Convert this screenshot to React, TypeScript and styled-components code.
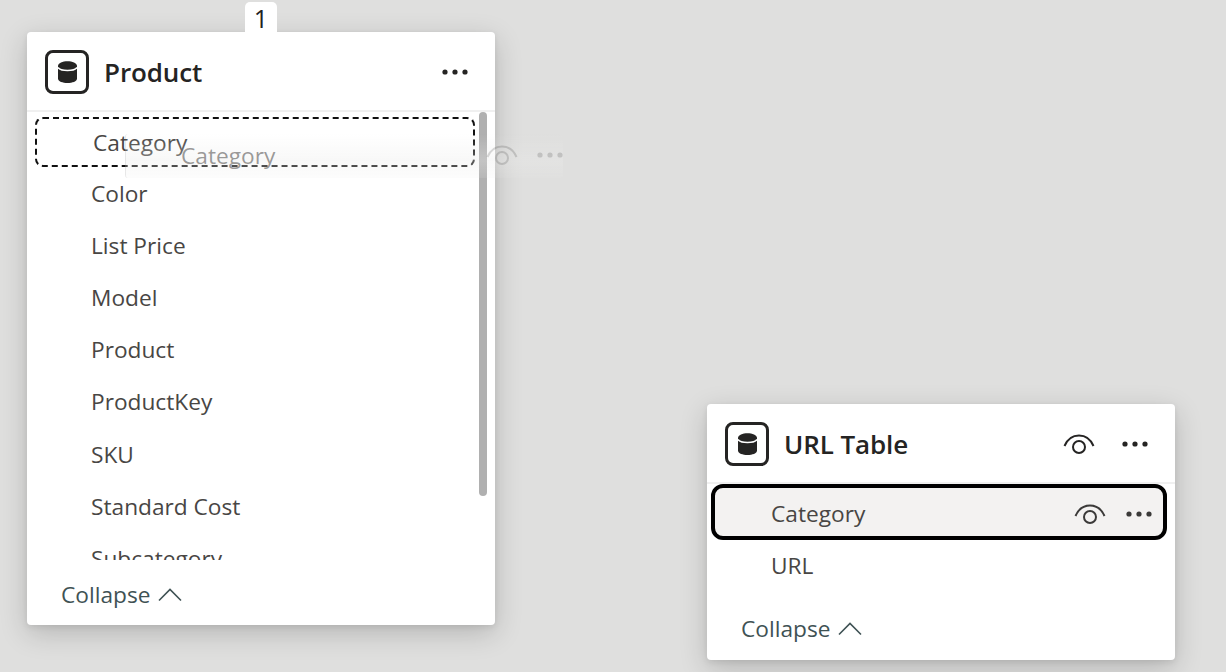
import React from "react";
import styled, { createGlobalStyle } from "styled-components";

const Global = createGlobalStyle`
  html, body { margin: 0; padding: 0; width: 1226px; height: 672px; overflow: hidden; background: #dfdfde; }
  * { box-sizing: border-box; }
`;

const Canvas = styled.div`
  position: relative;
  width: 1226px;
  height: 672px;
  overflow: hidden;
  background: #dfdfde;
  font-family: "Open Sans", "Noto Sans", "Liberation Sans", sans-serif;
`;

const Card = styled.section<{ $x: number; $y: number; $h: number }>`
  position: absolute;
  left: ${(p) => p.$x}px;
  top: ${(p) => p.$y}px;
  width: 468px;
  height: ${(p) => p.$h}px;
  background: #fff;
  border-radius: 4px;
  box-shadow: 0 8px 28px rgba(0, 0, 0, 0.19), 0 2px 6px rgba(0, 0, 0, 0.08);
  display: flex;
  flex-direction: column;
`;

const Badge = styled.div`
  position: absolute;
  left: 218px;
  top: -30px;
  width: 32px;
  height: 30px;
  background: #fff;
  border-radius: 5px 5px 0 0;
  color: #222;
  font-size: 25px;
  line-height: 33px;
  text-align: center;
`;

const Header = styled.header`
  height: 80px;
  flex: none;
  display: flex;
  align-items: center;
  padding: 0 27px 0 18px;
  border-bottom: 2px solid #f0f0f0;
`;

const TableIcon = styled.div`
  width: 44px;
  height: 44px;
  flex: none;
  margin-top: 1px;
  border: 3px solid #252423;
  border-radius: 8px;
  display: flex;
  align-items: center;
  justify-content: center;
`;

const Title = styled.h2`
  margin: 2px 0 0 15px;
  flex: 1;
  font-size: 26px;
  font-weight: 600;
  color: #252423;
  letter-spacing: -0.1px;
`;

const HeadActions = styled.div`
  display: flex;
  align-items: center;
  gap: 27px;
  margin-top: 2px;
`;

const ListWrap = styled.div`
  position: relative;
  height: 448px;
  overflow: hidden;
  flex: none;
`;

const Row = styled.div`
  height: 52.2px;
  display: flex;
  align-items: center;
  padding-left: 64px;
  font-size: 22.7px;
  color: #484644;
`;

const ActiveRow = styled(Row)`
  height: 56px;
  padding: 3px 11px 0 56px;
  margin: 0 8px -1px 4px;
  border: 4px solid #000;
  border-radius: 12px;
  background: #f3f2f1;
  justify-content: space-between;
`;

const DashedRow = styled(Row)`
  height: 50px;
  margin: 5px 20px 0 8px;
  padding: 1px 0 0 56px;
  border: 2.5px dashed #111;
  border-radius: 8px;
`;

const RowActions = styled.div`
  display: flex;
  align-items: center;
  gap: 20px;
`;

const Scrollbar = styled.div`
  position: absolute;
  right: 8px;
  top: 0;
  width: 8px;
  height: 384px;
  border-radius: 4px;
  background: #b0b0b0;
`;

const CollapseRow = styled.div<{ $top: number }>`
  display: flex;
  align-items: center;
  gap: 8px;
  margin-top: ${(p) => p.$top}px;
  padding-left: 34px;
  color: #3f5254;
  font-size: 22.7px;
`;

const Ghost = styled.div`
  position: absolute;
  left: 125px;
  top: 134px;
  width: 438px;
  height: 44px;
  padding: 0 0 2px 55px;
  border-radius: 3px;
  border-left: 1px solid rgba(0, 0, 0, 0.08);
  background: linear-gradient(to bottom, rgba(235, 235, 234, 0), rgba(235, 235, 234, 0.35) 60%, rgba(235, 235, 234, 0.12));
  display: flex;
  align-items: center;
  font-size: 22.7px;
  color: rgba(72, 70, 68, 0.55);
`;

const GhostLabel = styled.span`
  flex: 1;
`;

const GhostActions = styled.div`
  display: flex;
  align-items: center;
  gap: 19px;
  opacity: 0.17;
`;

const Db = () => (
  <svg width="19" height="22" viewBox="0 0 19 22">
    <path d="M0 5C0-1.5 19-1.5 19 5V17.5c0 6-19 6-19 0Z" fill="#252423" />
    <path d="M0 6.5c2.5 4 16.5 4 19 0" fill="none" stroke="#fff" strokeWidth="1.6" />
  </svg>
);

const Eye = ({ color = "#252423" }: { color?: string }) => (
  <svg width="32" height="22" viewBox="0 0 32 22" fill="none" stroke={color} strokeWidth="2">
    <path d="M1.5 13C4.5 6 9.5 2.5 16 2.5S27.5 6 30.5 13" />
    <circle cx="16" cy="14" r="6" />
  </svg>
);

const Dots = ({ color = "#252423" }: { color?: string }) => (
  <svg width="26" height="6" viewBox="0 0 26 6" fill={color}>
    <circle cx="3" cy="3" r="2.6" />
    <circle cx="13" cy="3" r="2.6" />
    <circle cx="23" cy="3" r="2.6" />
  </svg>
);

const Chevron = () => (
  <svg width="24" height="15" viewBox="0 0 24 15" fill="none" stroke="#3f5254" strokeWidth="1.6">
    <path d="M1 13.5 12 2.5 23 13.5" />
  </svg>
);

const fields = ["Color", "List Price", "Model", "Product", "ProductKey", "SKU", "Standard Cost", "Subcategory"];

export default function App() {
  return (
    <Canvas>
      <Global />
      <Card $x={27} $y={32} $h={593}>
        <Badge>1</Badge>
        <Header>
          <TableIcon><Db /></TableIcon>
          <Title>Product</Title>
          <HeadActions><Dots /></HeadActions>
        </Header>
        <ListWrap>
          <DashedRow>Category</DashedRow>
          {fields.map((f) => (
            <Row key={f}>{f}</Row>
          ))}
          <Scrollbar />
        </ListWrap>
        <CollapseRow $top={19}>
          Collapse <Chevron />
        </CollapseRow>
      </Card>

      <Ghost>
        <GhostLabel>Category</GhostLabel>
        <GhostActions>
          <Eye />
          <Dots />
        </GhostActions>
      </Ghost>

      <Card $x={707} $y={404} $h={256}>
        <Header>
          <TableIcon><Db /></TableIcon>
          <Title>URL Table</Title>
          <HeadActions><Eye /><Dots /></HeadActions>
        </Header>
        <ActiveRow>
          Category
          <RowActions>
            <Eye color="#3b3a39" />
            <Dots color="#3b3a39" />
          </RowActions>
        </ActiveRow>
        <Row>URL</Row>
        <CollapseRow $top={22}>
          Collapse <Chevron />
        </CollapseRow>
      </Card>
    </Canvas>
  );
}
